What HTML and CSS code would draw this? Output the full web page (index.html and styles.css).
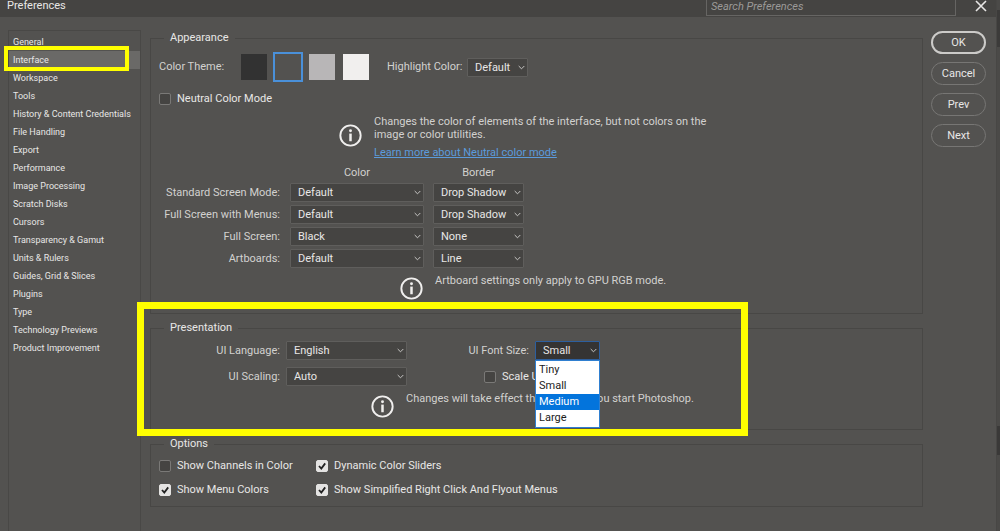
FILE: index.html
```
<!DOCTYPE html>
<html lang="en">
<head>
    <meta charset="UTF-8">
    <meta name="viewport" content="width=device-width, initial-scale=1.0">
    <title>Preferences</title>
    <link rel="stylesheet" href="styles.css">
</head>
<body>
    <svg class="symbols" aria-hidden="true">
        <symbol id="info" viewBox="0 0 24 24">
            <circle cx="12" cy="12" r="10.6" fill="none" stroke="currentColor" stroke-width="2"/>
            <circle cx="12" cy="7" r="1.5" fill="currentColor"/>
            <path d="M12 10v8" fill="none" stroke="currentColor" stroke-width="2.6"/>
        </symbol>
    </svg>

    <div class="dialog">
        <header class="titlebar">
            <h1>Preferences</h1>
            <input type="search" class="search" placeholder="Search Preferences" aria-label="Search Preferences">
            <button type="button" class="close" aria-label="Close">
                <svg viewBox="0 0 12 12"><path d="M1 1l10 10M11 1L1 11" stroke="currentColor" stroke-width="1.6"/></svg>
            </button>
        </header>

        <div class="content">
            <nav class="sidebar" aria-label="Sections">
                <a href="#general">General</a>
                <a href="#interface" class="active">Interface</a>
                <a href="#workspace">Workspace</a>
                <a href="#tools">Tools</a>
                <a href="#history">History &amp; Content Credentials</a>
                <a href="#files">File Handling</a>
                <a href="#export">Export</a>
                <a href="#performance">Performance</a>
                <a href="#image">Image Processing</a>
                <a href="#scratch">Scratch Disks</a>
                <a href="#cursors">Cursors</a>
                <a href="#transparency">Transparency &amp; Gamut</a>
                <a href="#units">Units &amp; Rulers</a>
                <a href="#guides">Guides, Grid &amp; Slices</a>
                <a href="#plugins">Plugins</a>
                <a href="#type">Type</a>
                <a href="#technology">Technology Previews</a>
                <a href="#product">Product Improvement</a>
                <div class="marker marker-nav"></div>
            </nav>

            <main class="panel">
                <fieldset class="appearance">
                    <legend>Appearance</legend>
                    <div class="theme-row">
                        <span class="label theme-label">Color Theme:</span>
                        <div class="swatches">
                            <button type="button" class="swatch darkest" aria-label="Darkest"></button>
                            <button type="button" class="swatch dark selected" aria-label="Dark"></button>
                            <button type="button" class="swatch light" aria-label="Light"></button>
                            <button type="button" class="swatch lightest" aria-label="Lightest"></button>
                        </div>
                        <label class="label theme-label" for="highlight">Highlight Color:</label>
                        <select id="highlight" class="highlight"><option>Default</option></select>
                    </div>
                    <label class="check"><input type="checkbox">Neutral Color Mode</label>
                    <div class="note note-neutral">
                        <svg class="info"><use href="#info"/></svg>
                        <div>
                            <p>Changes the color of elements of the interface, but not colors on the image or color utilities.</p>
                            <a href="#neutral">Learn more about Neutral color mode</a>
                        </div>
                    </div>
                    <div class="modes">
                        <span class="head head-color">Color</span>
                        <span class="head">Border</span>

                        <label class="label" for="standard">Standard Screen Mode:</label>
                        <select id="standard"><option>Default</option></select>
                        <select aria-label="Standard Screen Mode border"><option>Drop Shadow</option></select>

                        <label class="label" for="menus">Full Screen with Menus:</label>
                        <select id="menus"><option>Default</option></select>
                        <select aria-label="Full Screen with Menus border"><option>Drop Shadow</option></select>

                        <label class="label" for="full">Full Screen:</label>
                        <select id="full"><option>Black</option></select>
                        <select aria-label="Full Screen border"><option>None</option></select>

                        <label class="label" for="artboards">Artboards:</label>
                        <select id="artboards"><option>Default</option></select>
                        <select aria-label="Artboards border"><option>Line</option></select>
                    </div>
                    <div class="note note-artboard">
                        <svg class="info"><use href="#info"/></svg>
                        <p>Artboard settings only apply to GPU RGB mode.</p>
                    </div>
                </fieldset>

                <fieldset class="presentation">
                    <legend>Presentation</legend>
                    <div class="ui-grid">
                        <label class="label" for="language">UI Language:</label>
                        <select id="language"><option>English</option></select>
                        <label class="label" for="fontsize">UI Font Size:</label>
                        <div class="dropdown">
                            <select id="fontsize" class="open"><option>Small</option></select>
                            <ul class="menu" role="listbox" aria-label="UI Font Size">
                                <li role="option">Tiny</li>
                                <li role="option">Small</li>
                                <li role="option" class="hover" aria-selected="true">Medium</li>
                                <li role="option">Large</li>
                            </ul>
                        </div>
                        <label class="label" for="scaling">UI Scaling:</label>
                        <select id="scaling"><option>Auto</option></select>
                        <label class="check scale"><input type="checkbox">Scale UI To Font</label>
                    </div>
                    <div class="note note-restart">
                        <svg class="info"><use href="#info"/></svg>
                        <p>Changes will take effect the next time you start Photoshop.</p>
                    </div>
                    <div class="marker marker-presentation"></div>
                </fieldset>

                <fieldset class="options">
                    <legend>Options</legend>
                    <div class="option-grid">
                        <label class="check"><input type="checkbox">Show Channels in Color</label>
                        <label class="check"><input type="checkbox" checked>Dynamic Color Sliders</label>
                        <label class="check"><input type="checkbox" checked>Show Menu Colors</label>
                        <label class="check"><input type="checkbox" checked>Show Simplified Right Click And Flyout Menus</label>
                    </div>
                </fieldset>
            </main>

            <div class="actions">
                <button type="button" class="primary">OK</button>
                <button type="button">Cancel</button>
                <button type="button">Prev</button>
                <button type="button">Next</button>
            </div>
        </div>
    </div>
    <div class="backdrop"></div>
</body>
</html>
```
FILE: styles.css
```
* {
    box-sizing: border-box;
}

body {
    margin: 0;
    min-height: 100vh;
    display: flex;
    overflow: hidden;
    background-color: #535250;
    color: #e8e7e6;
    font-family: Roboto, "Noto Sans", sans-serif;
    font-size: 11px;
    line-height: 14px;
}

button, input, select {
    font: inherit;
    color: inherit;
    margin: 0;
}

p {
    margin: 0;
}

.symbols {
    position: absolute;
    width: 0;
    height: 0;
}

.dialog {
    flex: 1;
    display: flex;
    flex-direction: column;
}

.backdrop {
    width: 4px;
    border-left: 1px solid #484745;
    background: linear-gradient(#4b4a48 0 10px, #3c3b3a 10px 47px, #4b4a48 47px 426px, #3a3938 426px 455px, #4b4a48 455px);
}

/* Title bar */
.titlebar {
    display: flex;
    align-items: flex-end;
    height: 17px;
    padding: 0 8px 1px 7px;
    background-color: #454442;
}

.titlebar h1 {
    flex: 1;
    margin: 0;
    font-size: 11px;
    font-weight: normal;
    line-height: 20px;
}

.search {
    width: 250px;
    height: 20px;
    padding: 0 4px;
    border: 1px solid #666563;
    background-color: #454442;
    font-style: italic;
}

.search::placeholder {
    color: #9b9a98;
}

.close {
    display: flex;
    align-items: center;
    justify-content: center;
    width: 14px;
    height: 20px;
    margin-left: 18px;
    padding: 0;
    border: none;
    background: none;
}

.close svg {
    flex: none;
    width: 12px;
    height: 12px;
}

/* Layout */
.content {
    flex: 1;
    display: flex;
    padding: 14px 10px 0 8px;
}

.sidebar {
    position: relative;
    width: 133px;
    margin-top: -1px;
    padding-top: 2px;
    border: 1px solid #494846;
    border-bottom: none;
    font-size: 9px;
}

.sidebar a {
    display: block;
    padding-left: 4px;
    line-height: 18px;
    color: inherit;
    text-decoration: none;
    white-space: nowrap;
}

.sidebar .active {
    background-color: #6a6967;
}

.panel {
    flex: 1;
    padding: 0 8px 0 9px;
}

/* Groups */
fieldset {
    position: relative;
    min-width: 0;
    margin: 0 0 7px;
    padding: 0 8px;
    border: 1px solid #484745;
}

legend {
    margin-left: 5px;
    padding: 0 6px;
    line-height: 14px;
}

.label, .head, .note {
    color: #d2d1cf;
}

.label {
    white-space: nowrap;
}

select {
    appearance: none;
    width: 100%;
    height: 19px;
    padding: 1px 12px 0 7px;
    border: 1px solid #5f5e5c;
    border-radius: 1px;
    background: #454442 url("data:image/svg+xml,%3Csvg xmlns='http://www.w3.org/2000/svg' width='7' height='5'%3E%3Cpath d='M.7 1l2.8 2.8L6.3 1' fill='none' stroke='%23c8c7c5'/%3E%3C/svg%3E") no-repeat right 2px center;
}

.theme-row {
    display: flex;
    align-items: center;
    margin-top: 7px;
}

.theme-label {
    width: 80px;
}

.swatches {
    display: flex;
    gap: 4px;
    margin-right: 16px;
}

.swatch {
    width: 30px;
    height: 30px;
    padding: 0;
    border: 2px solid transparent;
    background-clip: padding-box;
}

.darkest {
    background-color: #323232;
}

.dark {
    background-color: #535250;
}

.light {
    background-color: #b8b6b7;
}

.lightest {
    background-color: #f1efee;
}

.selected {
    border-color: #4a90d9;
}

.highlight {
    width: 61px;
}

.check {
    display: flex;
    align-items: center;
    gap: 6px;
    white-space: nowrap;
}

.check input {
    appearance: none;
    width: 12px;
    height: 12px;
    border: 1px solid #7a7977;
    border-radius: 2px;
    background-color: #454442;
}

.check input:checked {
    border-color: #e4e3e2;
    background: #e4e3e2 url("data:image/svg+xml,%3Csvg xmlns='http://www.w3.org/2000/svg' width='10' height='10'%3E%3Cpath d='M2 5l2.3 2.6L8.2 2.4' fill='none' stroke='%23222' stroke-width='1.8'/%3E%3C/svg%3E") center no-repeat;
}

.appearance {
    height: 283px;
}

.appearance > .check {
    margin-top: 10px;
}

.note {
    display: flex;
}

.info {
    flex: none;
    width: 23px;
    height: 23px;
    margin-right: 12px;
    color: #f0efee;
}

.note-neutral {
    max-width: 565px;
    padding-left: 180px;
    margin-top: 9px;
    line-height: 13px;
}

.note-neutral .info {
    margin-top: 9px;
}

.note-neutral a {
    display: block;
    margin-top: 5px;
    color: #5b9bdc;
}

.modes {
    display: grid;
    grid-template-columns: 122px 134px 91px;
    gap: 3px 9px;
    align-items: center;
    margin-top: 7px;
}

.modes .label {
    padding-right: 1px;
    text-align: right;
}

.head {
    text-align: center;
}

.head-color {
    grid-column: 2;
}

.note-artboard {
    margin: 9px 0 0 241px;
    line-height: 8px;
}

.presentation {
    height: 109px;
}

.ui-grid {
    display: grid;
    grid-template-columns: 121px 121px 116px 65px;
    row-gap: 7px;
    column-gap: 6px;
    align-items: center;
    margin-top: 6px;
}

.ui-grid .label {
    text-align: right;
}

.dropdown {
    position: relative;
}

.open {
    display: block;
    border-color: #2d5f9e;
    background-color: #353433;
}

.menu {
    position: absolute;
    z-index: 1;
    top: 19px;
    left: 0;
    right: 0;
    margin: 0;
    padding: 1px 0;
    border: 1px solid #2f7fd0;
    background-color: #fff;
    color: #1c1c1c;
    list-style: none;
    line-height: 16px;
}

.menu li {
    padding-left: 3px;
}

.menu .hover {
    background-color: #0374dc;
    color: #fff;
}

.scale {
    grid-column: 3 / 5;
    padding-left: 71px;
}

.note-restart {
    margin: 9px 0 0 212px;
    line-height: 8px;
}

.options {
    margin-bottom: 0;
    padding-bottom: 9px;
}

.option-grid {
    display: grid;
    grid-template-columns: 157px 1fr;
    gap: 10px 0;
    margin-top: 8px;
}

/* Buttons */
.actions {
    display: flex;
    flex-direction: column;
    gap: 8px;
    width: 55px;
}

.actions button {
    height: 23px;
    padding: 1px 0 0;
    border: 1px solid #777674;
    border-radius: 12px;
    background: none;
}

.actions .primary {
    border: 2px solid #cccbc9;
}

/* Yellow callouts */
.marker {
    position: absolute;
    border: 7px solid #ffff00;
    pointer-events: none;
}

.marker-nav {
    top: 15px;
    left: -5px;
    width: 125px;
    height: 25px;
    border-width: 4px;
}

.marker-presentation {
    top: -33px;
    left: -14px;
    width: 611px;
    height: 134px;
}
```
